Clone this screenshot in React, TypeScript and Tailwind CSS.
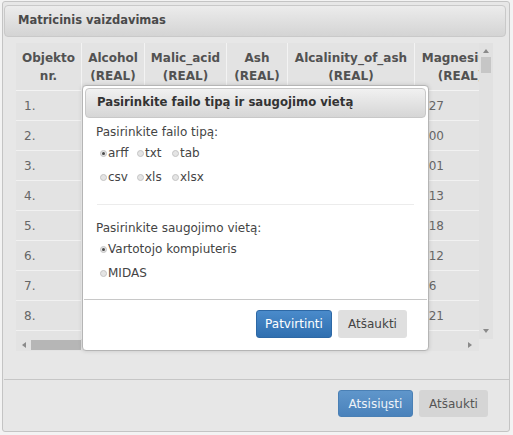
import React from "react";

const cols = [
  { name: "Objekto", sub: "nr.", w: 66 },
  { name: "Alcohol", sub: "(REAL)", w: 63 },
  { name: "Malic_acid", sub: "(REAL)", w: 82 },
  { name: "Ash", sub: "(REAL)", w: 61 },
  { name: "Alcalinity_of_ash", sub: "(REAL)", w: 127 },
  { name: "Magnesium", sub: "(REAL)", w: 92 },
];

const rows = [
  ["1.", "14.23", "1.71", "2.43", "15.6", "127"],
  ["2.", "13.2", "1.78", "2.14", "11.2", "100"],
  ["3.", "13.16", "2.36", "2.67", "18.6", "101"],
  ["4.", "14.37", "1.95", "2.5", "16.8", "113"],
  ["5.", "13.24", "2.59", "2.87", "21", "118"],
  ["6.", "14.2", "1.76", "2.45", "15.2", "112"],
  ["7.", "14.39", "1.87", "2.45", "14.6", "96"],
  ["8.", "14.06", "2.15", "2.61", "17.6", "121"],
  ["9.", "14.83", "1.64", "2.17", "14", "97"],
];

function Radio({ checked }: { checked?: boolean }) {
  return (
    <span className="inline-flex w-[7px] h-[7px] rounded-full border border-[#c4c4c4] bg-[#e4e4e4] items-center justify-center mr-[1px] shrink-0">
      {checked && <span className="w-[3px] h-[3px] rounded-full bg-[#4a4a4a]" />}
    </span>
  );
}

function Opt({ label, checked }: { label: string; checked?: boolean }) {
  return (
    <span className="inline-flex items-center">
      <Radio checked={checked} />
      <span>{label}</span>
    </span>
  );
}

function Tri({ dir }: { dir: "up" | "down" | "left" | "right" }) {
  const d =
    dir === "up"
      ? "M0 4 L3 0 L6 4 Z"
      : dir === "down"
      ? "M0 0 L6 0 L3 4 Z"
      : dir === "left"
      ? "M4 0 L4 6 L0 3 Z"
      : "M0 0 L4 3 L0 6 Z";
  const w = dir === "up" || dir === "down" ? 6 : 4;
  const h = dir === "up" || dir === "down" ? 4 : 6;
  return (
    <svg width={w} height={h} viewBox={`0 0 ${w} ${h}`}>
      <path d={d} fill="#8a8a8a" />
    </svg>
  );
}

export default function App() {
  return (
    <div className="relative w-[513px] h-[435px] bg-[#f3f3f3] pt-[1px] pl-[2px] font-['DejaVu_Sans',Verdana,sans-serif] text-[12px] text-[#444] overflow-hidden">
      {/* main window */}
      <div className="w-[508px] h-[431px] border border-[#c4c4c4] rounded-[3px] bg-[#e7e7e7] flex flex-col pt-[3px] pl-[1px]">
        <div className="w-[502px] h-[32px] shrink-0 border border-[#c9c9c9] rounded-[4px] bg-gradient-to-b from-[#ececec] to-[#d4d4d4] flex items-center pl-[13px]">
          <span className="font-bold text-[11.5px] text-[#4a4a4a]">Matricinis vaizdavimas</span>
        </div>

        {/* table area */}
        <div className="ml-[12px] mt-[6px] w-[477px] h-[308px] flex flex-col shrink-0">
          <div className="flex h-[296px]">
            <div className="w-[463px] h-[296px] overflow-hidden bg-[#e3e3e3]">
              <div className="flex w-max">
                {cols.map((c, i) => (
                  <div
                    key={i}
                    style={{ width: c.w }}
                    className="h-[48px] shrink-0 flex flex-col items-center justify-center border-r border-b border-[#f3f3f3] font-bold text-[#525252] leading-[18px] whitespace-nowrap overflow-hidden"
                  >
                    <span>{c.name}</span>
                    <span>{c.sub}</span>
                  </div>
                ))}
              </div>
              {rows.map((r, ri) => (
                <div key={ri} className="flex w-max">
                  {r.map((v, ci) => (
                    <div
                      key={ci}
                      style={{ width: cols[ci].w }}
                      className={`h-[30px] shrink-0 flex items-center border-r border-b border-[#f1f1f1] text-[#666] whitespace-nowrap ${
                        ci === 0 ? "pl-[8px]" : "pl-[6px]"
                      }`}
                    >
                      {v}
                    </div>
                  ))}
                </div>
              ))}
            </div>
            {/* vertical scrollbar */}
            <div className="w-[14px] h-[296px] bg-[#e1e1e1] flex flex-col items-center">
              <div className="h-[13px] flex items-center justify-center pt-[2px]">
                <Tri dir="up" />
              </div>
              <div className="w-[10px] h-[16px] mt-[1px] bg-[#c6c6c6]" />
              <div className="flex-1" />
              <div className="h-[13px] flex items-center justify-center pb-[4px]">
                <Tri dir="down" />
              </div>
            </div>
          </div>
          {/* horizontal scrollbar */}
          <div className="flex h-[12px]">
            <div className="w-[463px] h-[12px] bg-[#e3e3e3] flex items-center">
              <div className="w-[15px] h-[12px] flex items-center justify-center">
                <Tri dir="left" />
              </div>
              <div className="w-[50px] h-[10px] bg-[#b6b6b6]" />
              <div className="flex-1" />
              <div className="w-[15px] h-[12px] flex items-center justify-center pr-[4px]">
                <Tri dir="right" />
              </div>
            </div>
            <div className="w-[14px] h-[12px] bg-[#e7e7e7]" />
          </div>
        </div>

        {/* footer */}
        <div className="mt-[28px] border-t border-[#c6c6c6] flex justify-end gap-[6px] pt-[10px] pr-[21px]">
          <button className="w-[75px] h-[27px] rounded-[3px] border border-[#4a80b5] bg-gradient-to-b from-[#5f96cb] to-[#4a82bb] text-[#eef3f8] text-[12px]">
            Atsisiųsti
          </button>
          <button className="w-[69px] h-[27px] rounded-[3px] bg-[#d5d5d5] text-[#555] text-[12px]">
            Atšaukti
          </button>
        </div>
      </div>

      {/* modal */}
      <div className="absolute left-[82px] top-[85px] w-[347px] h-[266px] border border-[#b5b5b5] rounded-[4px] bg-white p-[1px] flex flex-col shadow-[0_0_4px_rgba(0,0,0,0.15)]">
        <div className="h-[30px] mx-[1px] mt-[1px] shrink-0 border border-[#c8c8c8] rounded-[4px] bg-gradient-to-b from-[#f1f1f1] to-[#d6d6d6] flex items-center pl-[11px]">
          <span className="font-bold text-[11.7px] text-[#333]">
            Pasirinkite failo tipą ir saugojimo vietą
          </span>
        </div>
        <div className="h-[181px] shrink-0 flex flex-col pt-[5px] text-[#444]">
          <div className="pl-[12px] leading-[18px]">Pasirinkite failo tipą:</div>
          <div className="pl-[16px] grid grid-cols-[37px_35px_auto] h-[24px] items-center">
            <Opt label="arff" checked />
            <Opt label="txt" />
            <Opt label="tab" />
          </div>
          <div className="pl-[16px] grid grid-cols-[37px_35px_auto] h-[24px] items-center">
            <Opt label="csv" />
            <Opt label="xls" />
            <Opt label="xlsx" />
          </div>
          <div className="mt-[15px] ml-[13px] mr-[13px] border-t border-[#ececec]" />
          <div className="mt-[14px] pl-[12px] leading-[18px]">Pasirinkite saugojimo vietą:</div>
          <div className="pl-[16px] h-[24px] flex items-center">
            <Opt label="Vartotojo kompiuteris" checked />
          </div>
          <div className="pl-[16px] h-[24px] flex items-center">
            <Opt label="MIDAS" />
          </div>
        </div>
        <div className="border-t border-[#c8c8c8] flex justify-end gap-[6px] pt-[10px] pr-[20px]">
          <button className="w-[76px] h-[28px] rounded-[3px] border border-[#2d68a5] bg-gradient-to-b from-[#4a8bcb] to-[#2f6fb0] text-white text-[12px]">
            Patvirtinti
          </button>
          <button className="w-[69px] h-[28px] rounded-[3px] bg-[#dfdfdf] text-[#444] text-[12px]">
            Atšaukti
          </button>
        </div>
      </div>
    </div>
  );
}
